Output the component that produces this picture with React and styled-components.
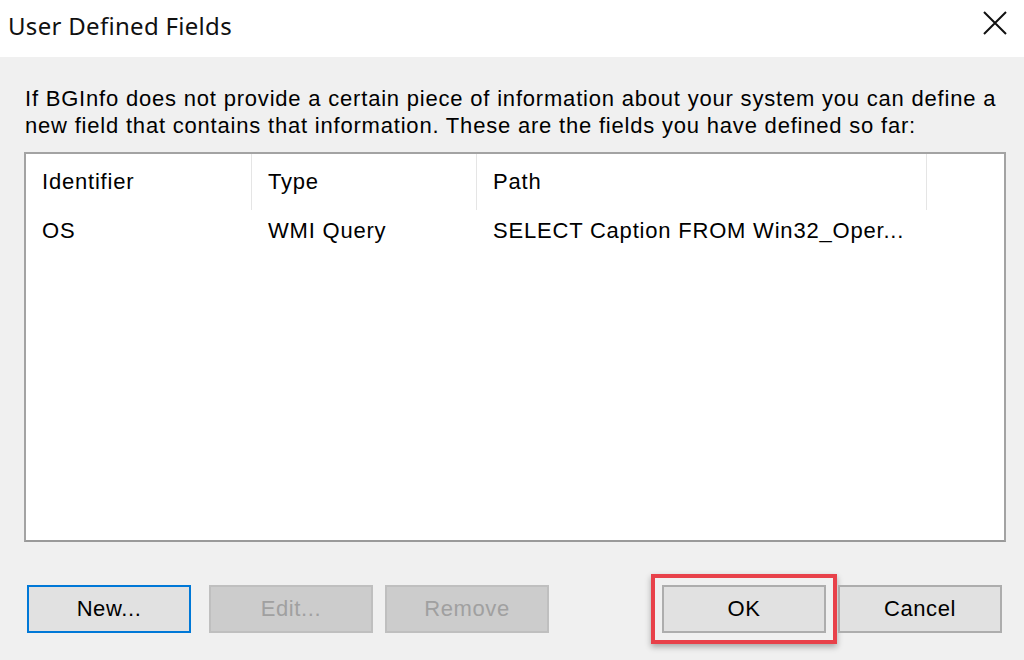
import styled, { createGlobalStyle } from "styled-components";

const GlobalStyle = createGlobalStyle`
  html, body {
    margin: 0;
    padding: 0;
    background: #f0f0f0;
  }
  #root {
    width: 1024px;
    height: 660px;
  }
`;

const fields = [
  { id: "OS", type: "WMI Query", path: "SELECT Caption FROM Win32_Oper..." },
];

export default function App() {
  return (
    <>
      <GlobalStyle />
      <Dialog>
        <TitleBar>
          <Title>User Defined Fields</Title>
          <CloseButton aria-label="Close">
            <svg width="24" height="24" viewBox="0 0 24 24">
              <path d="M1 1 L23 23 M23 1 L1 23" stroke="#111" strokeWidth="2" fill="none" />
            </svg>
          </CloseButton>
        </TitleBar>
        <Body>
          <Description>
            If BGInfo does not provide a certain piece of information about your system you can define a
            <br />
            new field that contains that information. These are the fields you have defined so far:
          </Description>
          <ListView>
            <HeaderRow>
              <HeaderCell>Identifier</HeaderCell>
              <HeaderCell>Type</HeaderCell>
              <HeaderCell>Path</HeaderCell>
              <HeaderCell $filler />
            </HeaderRow>
            {fields.map((f) => (
              <Row key={f.id}>
                <Cell>{f.id}</Cell>
                <Cell>{f.type}</Cell>
                <Cell>{f.path}</Cell>
                <Cell />
              </Row>
            ))}
          </ListView>
          <ButtonBar>
            <ButtonGroup>
              <Button $focused>New...</Button>
              <Button disabled $gap={18}>Edit...</Button>
              <Button disabled $gap={12}>Remove</Button>
            </ButtonGroup>
            <ButtonGroup>
              <Highlight>
                <Button>OK</Button>
              </Highlight>
              <Button $gap={1}>Cancel</Button>
            </ButtonGroup>
          </ButtonBar>
        </Body>
      </Dialog>
    </>
  );
}

const Dialog = styled.div`
  width: 1024px;
  height: 660px;
  display: flex;
  flex-direction: column;
  background: #f0f0f0;
  font-family: "Liberation Sans", Arial, sans-serif;
  color: #000;
`;

const TitleBar = styled.div`
  height: 57px;
  flex: none;
  background: #fff;
  display: flex;
  align-items: center;
  justify-content: space-between;
  padding: 0 17px 0 8px;
  box-sizing: border-box;
`;

const Title = styled.div`
  font-family: "Noto Sans", "Open Sans", sans-serif;
  font-size: 24px;
  letter-spacing: 0.3px;
  color: #111;
  margin-top: -6px;
`;

const CloseButton = styled.div`
  width: 24px;
  height: 24px;
  display: flex;
  margin-top: -11px;
`;

const Body = styled.div`
  flex: 1;
  display: flex;
  flex-direction: column;
  padding: 28px 18px 0 24px;
`;

const Description = styled.div`
  font-size: 22px;
  line-height: 27px;
  letter-spacing: 0.8px;
  margin-left: 1px;
  white-space: nowrap;
`;

const ListView = styled.div`
  margin-top: 13px;
  height: 390px;
  box-sizing: border-box;
  background: #fff;
  border: 2px solid #a3a3a3;
  border-bottom-color: #9a9a9a;
  overflow: hidden;
`;

const columns = `226px 225px 450px 1fr`;

const HeaderRow = styled.div`
  display: grid;
  grid-template-columns: ${columns};
  height: 56px;
`;

const HeaderCell = styled.div`
  display: flex;
  align-items: center;
  padding: 0 16px;
  font-size: 22px;
  letter-spacing: 0.8px;
  border-right: ${(p) => (p.$filler ? "none" : "1px solid #e5e5e5")};
`;

const Row = styled.div`
  display: grid;
  grid-template-columns: ${columns};
  height: 42px;
`;

const Cell = styled.div`
  display: flex;
  align-items: center;
  padding: 0 16px;
  font-size: 22px;
  letter-spacing: 0.8px;
  white-space: nowrap;
`;

const ButtonBar = styled.div`
  display: flex;
  justify-content: space-between;
  align-items: center;
  padding: 0 4px 0 3px;
  margin-top: 32px;
`;

const ButtonGroup = styled.div`
  display: flex;
  align-items: center;
`;

const Button = styled.button`
  width: 164px;
  height: 48px;
  margin-left: ${(p) => p.$gap || 0}px;
  box-sizing: border-box;
  font-family: "Liberation Sans", Arial, sans-serif;
  font-size: 22px;
  letter-spacing: 0.6px;
  color: #000;
  background: #e1e1e1;
  border: 2px solid ${(p) => (p.$focused ? "#0078d7" : "#adadad")};
  padding: 0;

  &:disabled {
    background: #cccccc;
    border-color: #bfbfbf;
    color: #a0a0a0;
  }
`;

const Highlight = styled.div`
  padding: 7px 7px;
  border: 4px solid #e8414a;
  box-shadow: 0 3px 6px rgba(0, 0, 0, 0.3);
  display: flex;
`;
